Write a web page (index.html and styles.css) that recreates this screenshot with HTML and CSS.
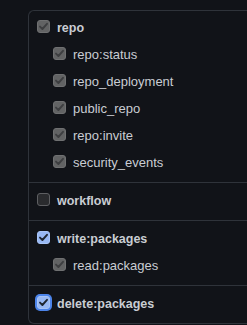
FILE: index.html
```html
<!DOCTYPE html>
<html>
<head>
<meta charset="utf-8">
<link rel="stylesheet" href="styles.css">
</head>
<body>
<div class="scopes">
  <div class="section first">
    <label class="row top"><span class="cb disabled"><svg viewBox="0 0 13 13"><path d="M3 6.6 L5.4 9 L10 3.8"/></svg></span><span class="name">repo</span></label>
    <label class="row sub"><span class="cb disabled"><svg viewBox="0 0 13 13"><path d="M3 6.6 L5.4 9 L10 3.8"/></svg></span><span class="name">repo:status</span></label>
    <label class="row sub"><span class="cb disabled"><svg viewBox="0 0 13 13"><path d="M3 6.6 L5.4 9 L10 3.8"/></svg></span><span class="name">repo_deployment</span></label>
    <label class="row sub"><span class="cb disabled"><svg viewBox="0 0 13 13"><path d="M3 6.6 L5.4 9 L10 3.8"/></svg></span><span class="name">public_repo</span></label>
    <label class="row sub"><span class="cb disabled"><svg viewBox="0 0 13 13"><path d="M3 6.6 L5.4 9 L10 3.8"/></svg></span><span class="name">repo:invite</span></label>
    <label class="row sub"><span class="cb disabled"><svg viewBox="0 0 13 13"><path d="M3 6.6 L5.4 9 L10 3.8"/></svg></span><span class="name">security_events</span></label>
  </div>
  <div class="section">
    <label class="row top"><span class="cb empty"></span><span class="name">workflow</span></label>
  </div>
  <div class="section">
    <label class="row top"><span class="cb checked"><svg viewBox="0 0 13 13"><path d="M3 6.6 L5.4 9 L10 3.8"/></svg></span><span class="name">write:packages</span></label>
    <label class="row sub"><span class="cb disabled"><svg viewBox="0 0 13 13"><path d="M3 6.6 L5.4 9 L10 3.8"/></svg></span><span class="name">read:packages</span></label>
  </div>
  <div class="section last">
    <label class="row top"><span class="cb checked focus"><svg viewBox="0 0 13 13"><path d="M3 6.6 L5.4 9 L10 3.8"/></svg></span><span class="name">delete:packages</span></label>
  </div>
</div>
</body>
</html>
```
FILE: styles.css
```css
html, body {
  margin: 0;
  padding: 0;
  background: #111318;
  overflow: hidden;
  height: 325px;
}
body {
  font-family: "Liberation Sans", Arial, sans-serif;
  color: #c9cdd3;
}
.scopes {
  margin: 10px 0 0 28px;
  border: 1px solid #2f333a;
  border-right: none;
  border-radius: 6px 0 0 6px;
}
.section {
  padding: 3px 0 7px 8px;
  border-top: 1px solid #2f333a;
}
.section.first {
  border-top: none;
  padding-top: 2px;
}
.row {
  display: flex;
  align-items: center;
  height: 27px;
}
.row.sub {
  padding-left: 16px;
}
.cb {
  width: 13px;
  height: 13px;
  box-sizing: border-box;
  border-radius: 3px;
  flex: none;
  display: block;
  position: relative;
}
.cb svg {
  display: block;
  width: 13px;
  height: 13px;
  position: absolute;
  left: -1px;
  top: -1px;
}
.cb path {
  fill: none;
  stroke-width: 1.9;
  stroke-linecap: round;
  stroke-linejoin: round;
}
.cb.disabled {
  background: #626364;
  border: 1px solid #6f7071;
}
.cb.disabled path {
  stroke: #3d3e40;
}
.cb.empty {
  background: #2a2b2e;
  border: 1px solid #5e5f62;
}
.cb.checked {
  background: #98b8f3;
  border: 1px solid #a8c4f6;
}
.cb.checked path {
  stroke: #1f2630;
}
.cb.focus {
  box-shadow: 0 0 0 2px #4c84ea;
}
.name {
  margin-left: 7px;
  padding-top: 3px;
  font-size: 13px;
  line-height: 16px;
}
.top .name {
  font-weight: bold;
  font-size: 12.5px;
}
```
